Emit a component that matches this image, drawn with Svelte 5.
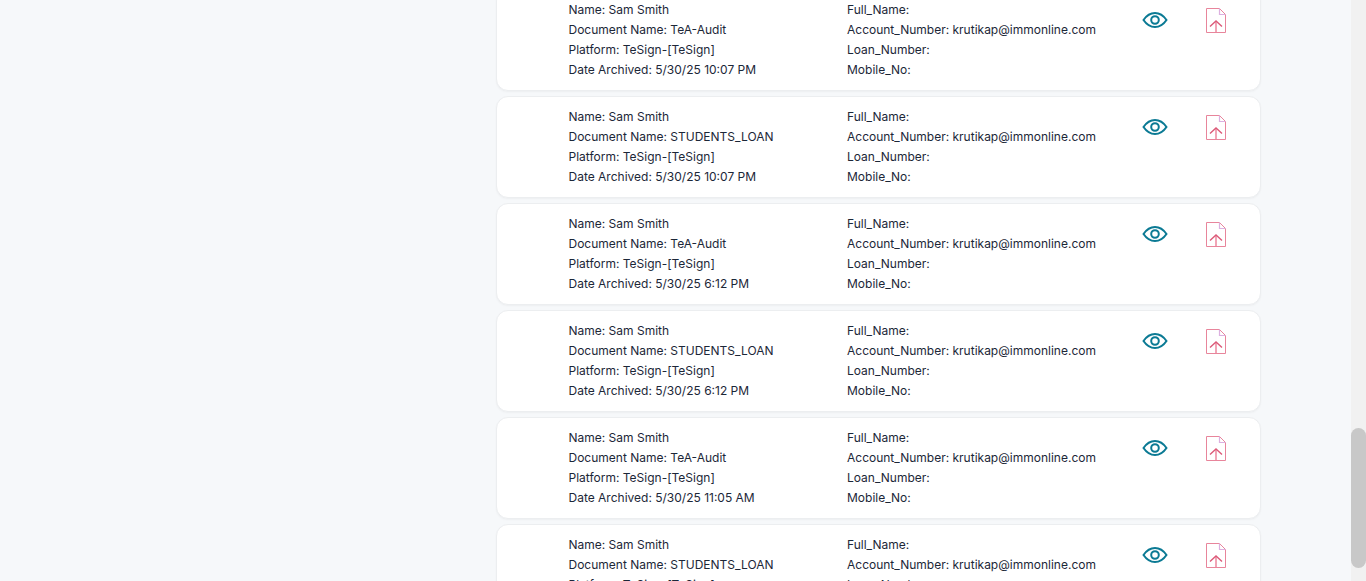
<script>
const records = [
	{ doc: 'TeA-Audit', date: '5/30/25 10:07 PM' },
	{ doc: 'STUDENTS_LOAN', date: '5/30/25 10:07 PM' },
	{ doc: 'TeA-Audit', date: '5/30/25 6:12 PM' },
	{ doc: 'STUDENTS_LOAN', date: '5/30/25 6:12 PM' },
	{ doc: 'TeA-Audit', date: '5/30/25 11:05 AM' },
	{ doc: 'STUDENTS_LOAN', date: '5/30/25 11:05 AM' }
]
</script>

<div class="page">
	<main>
		<ul class="list">
			{#each records as rec}
				<li class="card">
					<div class="details">
						<span>Name: Sam Smith</span>
						<span>Document Name: {rec.doc}</span>
						<span>Platform: TeSign-[TeSign]</span>
						<span>Date Archived: {rec.date}</span>
					</div>
					<div class="details">
						<span>Full_Name:</span>
						<span>Account_Number: krutikap@immonline.com</span>
						<span>Loan_Number:</span>
						<span>Mobile_No:</span>
					</div>
					<button class="icon eye" aria-label="View">
						<svg width="26" height="18" viewBox="0 0 26 18" fill="none" stroke="#0b7a94" stroke-width="2">
							<path d="M1.5 9C4.500 4.600 8.400 2 13 2s8.500 2.600 11.500 7c-3 4.400-6.900 7-11.500 7S4.500 13.400 1.500 9Z" />
							<circle cx="13" cy="9" r="3.800" />
						</svg>
					</button>
					<button class="icon doc" aria-label="Download">
						<svg width="22" height="27" viewBox="0 0 22 27" fill="none">
							<path d="M1.500 1.500H14.500L20.500 7.500V25.500H1.500Z" stroke="#e8859b" stroke-width="1" />
							<path d="M14.500 1.500V7.500H20.500" stroke="#dcb0e0" stroke-width="1.200" />
							<path d="M11 25V14" stroke="#ee8fa4" stroke-width="1.600" />
							<path d="M5 19.500L11 14L17 19.500" stroke="#dc5a78" stroke-width="1.400" />
						</svg>
					</button>
				</li>
			{/each}
		</ul>
	</main>
	<div class="scrollbar"><div class="thumb"></div></div>
</div>

<style>
	:global(body) {
		overflow: hidden;
	}
	.page {
		height: 581px;
		overflow: hidden;
		display: flex;
		background: #f6f8fa;
		font-family: Inter, "Liberation Sans", sans-serif;
		font-size: 12px;
		line-height: 20px;
		color: #1c2738;
	}
	main {
		flex: 1;
	}
	.scrollbar {
		width: 15px;
		background: #f1f1f1;
	}
	.thumb {
		height: 140px;
		margin-top: 428px;
		background: #c8c8c8;
		border-radius: 8px;
	}
	.list {
		list-style: none;
		width: 765px;
		margin: -11px 0 0 496px;
		padding: 0;
		display: flex;
		flex-direction: column;
		gap: 5px;
	}
	.card {
		box-sizing: border-box;
		height: 102px;
		padding: 10px 0 0 71.5px;
		display: grid;
		grid-template-columns: 278.5px 295px 64px 1fr;
		background: #fff;
		border: 1px solid #eceef0;
		border-radius: 12px;
		box-shadow: 0 1px 2px rgba(0, 0, 0, 0.04);
	}
	.details {
		display: flex;
		flex-direction: column;
		white-space: nowrap;
	}
	.icon {
		background: none;
		border: 0;
		padding: 0;
		display: block;
		align-self: start;
	}
	.icon svg {
		display: block;
	}
	.eye {
		margin-top: 11px;
		margin-left: -0.5px;
	}
	.doc {
		margin-top: 7px;
		margin-left: -1px;
	}
</style>
